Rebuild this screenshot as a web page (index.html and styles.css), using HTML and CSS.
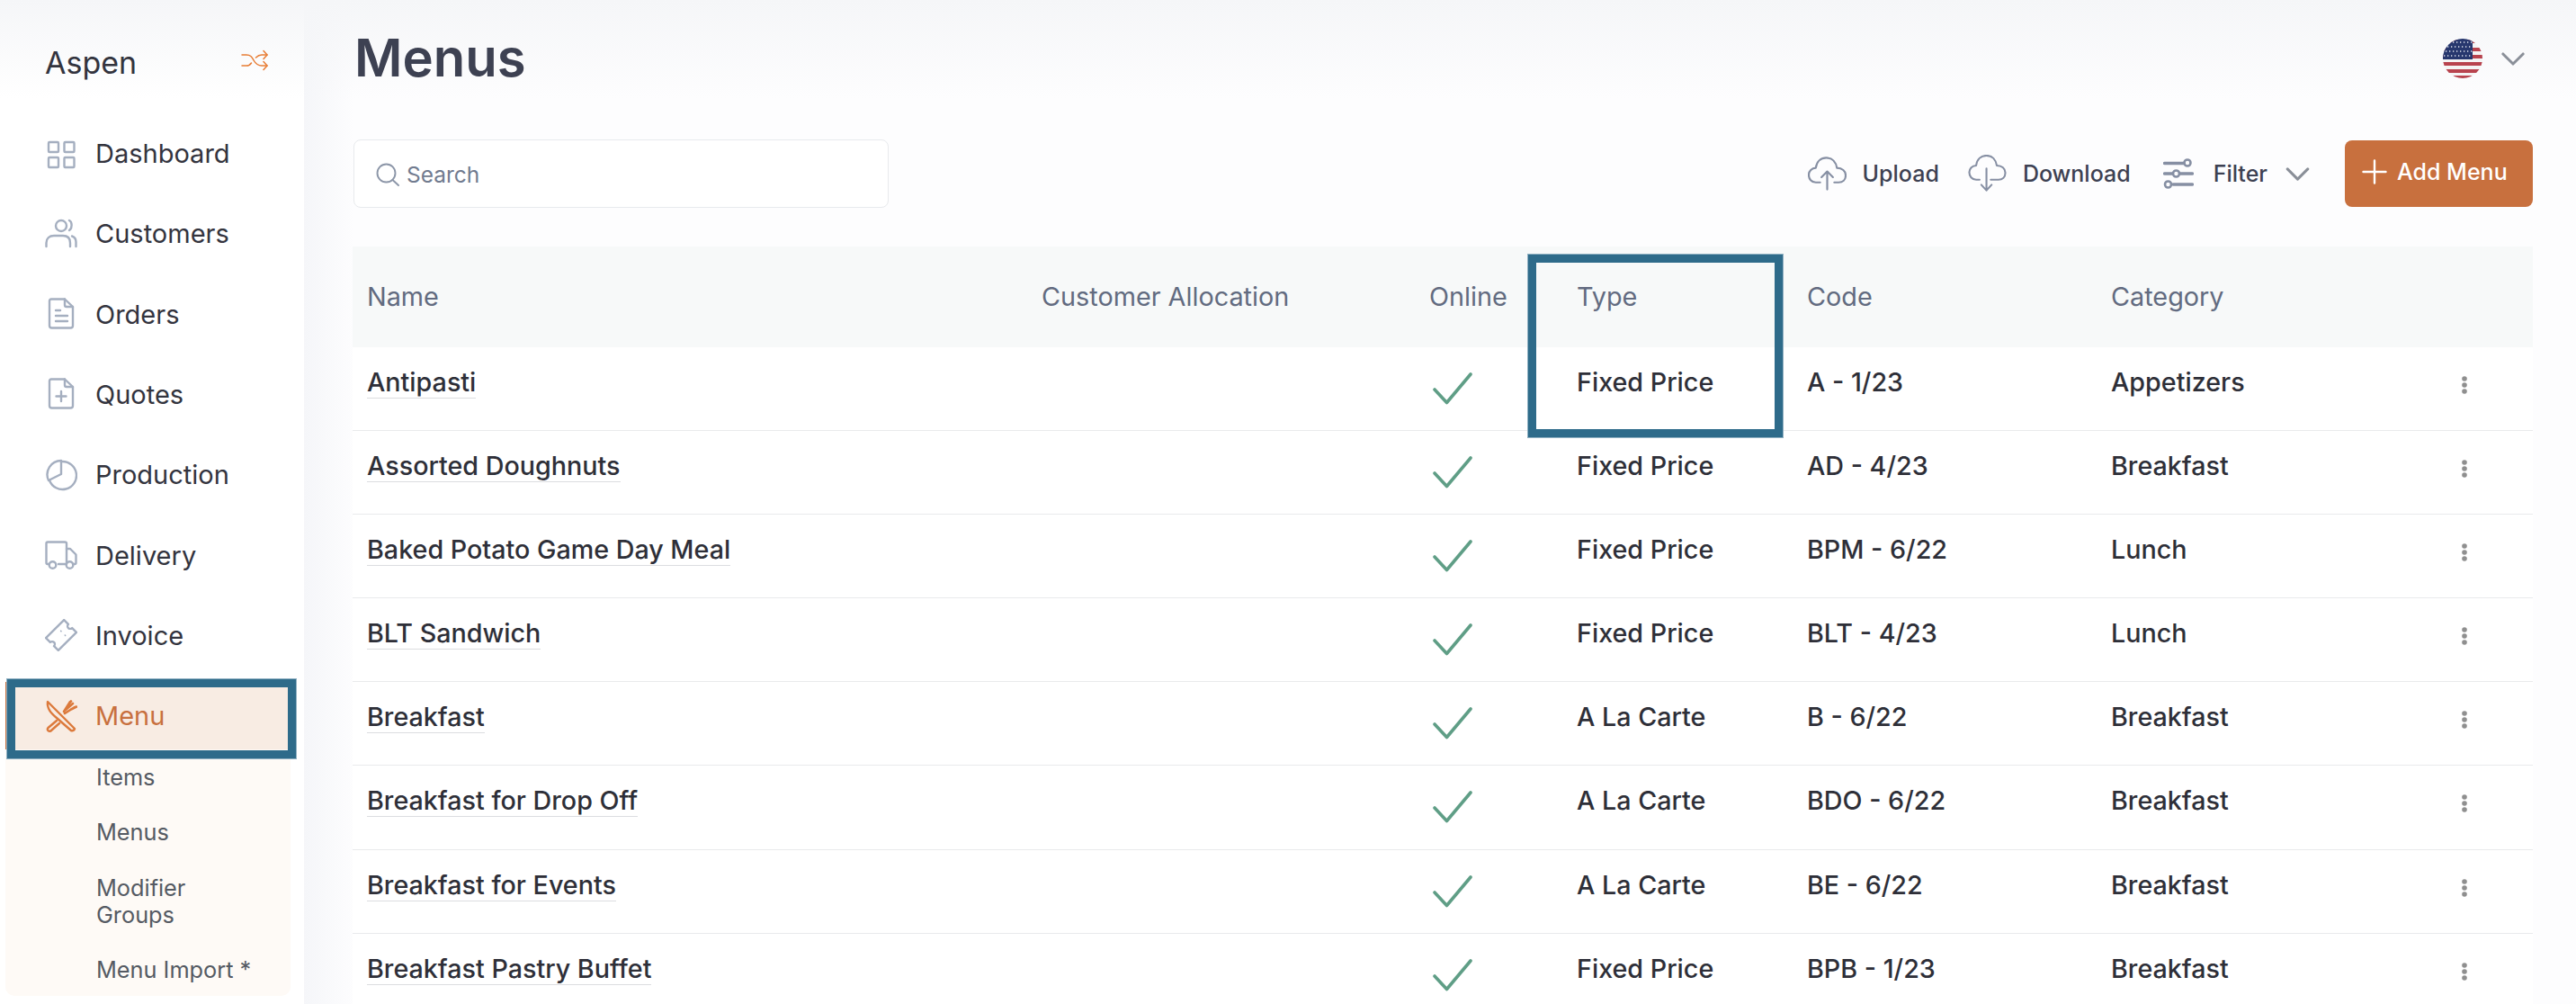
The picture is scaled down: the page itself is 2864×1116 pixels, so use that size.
FILE: index.html
```html
<!DOCTYPE html>
<html lang="en">
<head>
    <meta charset="UTF-8">
    <title>Aspen - Menus</title>
    <link rel="stylesheet" href="styles.css">
</head>
<body>
    <svg class="sprite" width="0" height="0">
        <symbol id="check" viewBox="0 0 44 36">
            <path d="M2 19 L15.500 33.500 L42 2" fill="none" stroke="#5f9e86" stroke-width="3.600" stroke-linecap="round" stroke-linejoin="round"/>
        </symbol>
        <symbol id="dots" viewBox="0 0 8 22">
            <circle cx="4" cy="4" r="2.800" fill="#8f8f8f"/>
            <circle cx="4" cy="11" r="2.800" fill="#8f8f8f"/>
            <circle cx="4" cy="18" r="2.800" fill="#8f8f8f"/>
        </symbol>
        <symbol id="chevron" viewBox="0 0 28 16">
            <path d="M2 2 L14 14 L26 2" fill="none" stroke="currentColor" stroke-width="3.200" stroke-linecap="round" stroke-linejoin="round"/>
        </symbol>
    </svg>

    <div class="app">
        <aside class="sidebar">
            <div class="brand">
                <span class="brand-name">Aspen</span>
                <svg class="brand-switch" viewBox="0 0 30 24" fill="none" stroke="#e87d35" stroke-width="1.500" stroke-linecap="round" stroke-linejoin="round">
                    <path d="M1 6 H6 C11 6 12 8.500 14 12 C16 15.500 18 18 23 18 H29"/>
                    <path d="M1 18 H6 C9 18 10.500 16.500 11.500 15 M16.500 9 C18 7.500 20 6 23 6 H29"/>
                    <path d="M25 1.500 L29 6 L25 10.500 M25 13.500 L29 18 L25 22.500"/>
                </svg>
            </div>

            <nav class="nav">
                <a class="nav-item">
                    <svg class="nav-icon" viewBox="0 0 36 36"><rect x="4" y="5" width="11" height="11" rx="1"/><rect x="21.500" y="5" width="11" height="11" rx="1"/><rect x="4" y="22" width="11" height="11" rx="1"/><rect x="21.500" y="22" width="11" height="11" rx="1"/></svg>
                    Dashboard
                </a>
                <a class="nav-item">
                    <svg class="nav-icon" viewBox="0 0 36 36"><circle cx="18" cy="9" r="6"/><path d="M27 3 C30.500 4.500 30.500 12 27 14"/><path d="M1.500 32 V28 C1.500 23 5 20 10 20 H20 C25 20 28 23 28 28 V32"/><path d="M30 20.500 C33 21.500 34.500 24 34.500 27 V32"/></svg>
                    Customers
                </a>
                <a class="nav-item">
                    <svg class="nav-icon" viewBox="0 0 36 36"><path d="M7 1.500 H22 L31 10 V31 Q31 33.500 28.500 33.500 H7.500 Q5 33.500 5 31 V3.500 Q5 1.500 7 1.500 Z"/><path d="M22 1.500 V8 Q22 10 24 10 H31"/><path d="M12 14 H17 M12 20 H25 M12 26 H25"/></svg>
                    Orders
                </a>
                <a class="nav-item">
                    <svg class="nav-icon" viewBox="0 0 36 36"><path d="M7 1.500 H22 L31 10 V31 Q31 33.500 28.500 33.500 H7.500 Q5 33.500 5 31 V3.500 Q5 1.500 7 1.500 Z"/><path d="M22 1.500 V8 Q22 10 24 10 H31"/><path d="M18 15 V26 M12.500 20.500 H23.500"/></svg>
                    Quotes
                </a>
                <a class="nav-item">
                    <svg class="nav-icon" viewBox="0 0 36 36"><path d="M19 3 A15.500 15.500 0 1 1 5 24"/><path d="M18 2 A15.500 15.500 0 0 0 4 24 L18 17 Z"/></svg>
                    Production
                </a>
                <a class="nav-item">
                    <svg class="nav-icon" viewBox="0 0 36 36"><path d="M5 28 H3 Q1.500 28 1.500 26.500 V5 Q1.500 3.500 3 3.500 H22 Q24 3.500 24 5 V28 H15"/><path d="M24 11 H28 L34.500 17.500 V26.500 Q34.500 28 33 28 H31"/><circle cx="8.500" cy="29" r="3.800"/><circle cx="27.500" cy="29" r="3.800"/></svg>
                    Delivery
                </a>
                <a class="nav-item">
                    <svg class="nav-icon" viewBox="0 0 36 36"><g transform="rotate(-45 18 18)"><path d="M3.750 8.250 H32.250 V15 A3 3 0 0 0 32.250 21 V27.750 H3.750 V21 A3 3 0 0 0 3.750 15 Z"/><path d="M21 14.500 V15 M21 21 V21.500" stroke-width="1.600"/></g></svg>
                    Invoice
                </a>
                <div class="nav-group">
                    <a class="nav-item nav-item-active">
                        <svg class="nav-icon" viewBox="0 0 36 36"><path d="M3 2 C2 10 7 15 13 20 L29 34 Q32 35 33 32 L3 2 Z"/><path d="M13 23 L3.500 31 Q2 33 4 34.500 Q6 35.500 7.500 33.500 L16 26"/><path d="M22 15 L33 8 M21 13 L28 2 M25 6.500 L29 1.500 M29 10.500 L35 7.500 M23 11 L31 4" stroke-width="2.600"/></svg>
                        Menu
                    </a>
                    <div class="callout callout-nav"></div>
                    <div class="subnav">
                        <a class="subnav-item">Items</a>
                        <a class="subnav-item">Menus</a>
                        <a class="subnav-item subnav-item-low">Modifier<br>Groups</a>
                        <a class="subnav-item subnav-item-low">Menu Import *</a>
                    </div>
                </div>
            </nav>
        </aside>

        <main class="main">
            <header class="topbar">
                <h1>Menus</h1>
                <div class="lang">
                    <svg class="flag" viewBox="0 0 44 44">
                        <clipPath id="flagClip"><circle cx="22" cy="22" r="22"/></clipPath>
                        <g clip-path="url(#flagClip)">
                            <rect width="44" height="44" fill="#f4f4f4"/>
                            <path d="M0 3 H44 M0 12 H44 M0 20 H44 M0 28 H44 M0 36 H44 M0 43 H44" stroke="#b8434e" stroke-width="3.800"/>
                            <rect width="33" height="23" fill="#27376e"/>
                            <path d="M3 4 H33 M1 9 H33 M3 14 H33 M1 19 H33" stroke="#dfe3ee" stroke-width="1.300" stroke-dasharray="1.300 2.700"/>
                        </g>
                    </svg>
                    <svg class="chevron chevron-lang"><use href="#chevron"/></svg>
                </div>
            </header>

            <div class="toolbar">
                <label class="search">
                    <svg class="search-icon" viewBox="0 0 26 26" fill="none" stroke="#8c96a8" stroke-width="1.900" stroke-linecap="round"><circle cx="11.500" cy="11.500" r="10"/><path d="M18.500 19 L25 25"/></svg>
                    <span>Search</span>
                </label>
                <div class="tools">
                    <a class="tool">
                        <svg class="tool-icon tool-icon-cloud" viewBox="0 0 44 40" fill="none" stroke="#868fa3" stroke-width="2.200" stroke-linecap="round" stroke-linejoin="round"><path d="M14 30 H9 C4 30 1 26 1 21.500 C1 17 4.500 13.500 9 13.500 C10 6 15 2 21 2 C28 2 32 7 33 13.500 C39 13.500 43 17 43 22 C43 27 39.500 30 35 30 H30"/><path d="M22 38 V18 M15.500 24 L22 17.500 L28.500 24"/></svg>
                        Upload
                    </a>
                    <a class="tool">
                        <svg class="tool-icon tool-icon-cloud" viewBox="0 0 44 44" fill="none" stroke="#868fa3" stroke-width="2.200" stroke-linecap="round" stroke-linejoin="round"><path d="M13 29 H9 C4 29 1 25 1 20.500 C1 16 4.500 12.500 9 12.500 C10 5 15 1 21 1 C28 1 32 6 33 12.500 C39 12.500 43 16 43 21 C43 26 39.500 29 35 29 H26"/><path d="M21 16 V41 M15 35 L21 41.500 L27 35"/></svg>
                        Download
                    </a>
                    <a class="tool tool-filter">
                        <svg class="tool-icon tool-icon-filter" viewBox="0 0 34 34" fill="none" stroke="#868fa3" stroke-width="3.400" stroke-linecap="round"><path d="M1.500 5.500 H23 M1.500 17 H10 M19 17 H32.500 M11 29 H32.500"/><circle cx="27" cy="5" r="3.500" stroke-width="2.600"/><circle cx="14.500" cy="17" r="3.500" stroke-width="2.600"/><circle cx="5.500" cy="29" r="3.500" stroke-width="2.600"/></svg>
                        Filter
                        <svg class="chevron chevron-filter"><use href="#chevron"/></svg>
                    </a>
                    <button class="add-btn">
                        <svg class="add-icon" viewBox="0 0 28 28" stroke="#fff" stroke-width="2.400" stroke-linecap="round"><path d="M14 1.500 V26.500 M1.500 14 H26.500"/></svg>
                        Add Menu
                    </button>
                </div>
            </div>

            <div class="table-wrap">
                <table class="menus">
                    <colgroup>
                        <col class="col-name"><col class="col-alloc"><col class="col-online"><col class="col-type"><col class="col-code"><col class="col-cat"><col class="col-more">
                    </colgroup>
                    <thead>
                        <tr><th>Name</th><th>Customer Allocation</th><th>Online</th><th>Type</th><th>Code</th><th>Category</th><th></th></tr>
                    </thead>
                    <tbody>
                        <tr><td><span class="name">Antipasti</span></td><td></td><td><svg class="check"><use href="#check"/></svg></td><td>Fixed Price</td><td>A - 1/23</td><td>Appetizers</td><td><svg class="dots"><use href="#dots"/></svg></td></tr>
                        <tr><td><span class="name">Assorted Doughnuts</span></td><td></td><td><svg class="check"><use href="#check"/></svg></td><td>Fixed Price</td><td>AD - 4/23</td><td>Breakfast</td><td><svg class="dots"><use href="#dots"/></svg></td></tr>
                        <tr><td><span class="name">Baked Potato Game Day Meal</span></td><td></td><td><svg class="check"><use href="#check"/></svg></td><td>Fixed Price</td><td>BPM - 6/22</td><td>Lunch</td><td><svg class="dots"><use href="#dots"/></svg></td></tr>
                        <tr><td><span class="name">BLT Sandwich</span></td><td></td><td><svg class="check"><use href="#check"/></svg></td><td>Fixed Price</td><td>BLT - 4/23</td><td>Lunch</td><td><svg class="dots"><use href="#dots"/></svg></td></tr>
                        <tr><td><span class="name">Breakfast</span></td><td></td><td><svg class="check"><use href="#check"/></svg></td><td>A La Carte</td><td>B - 6/22</td><td>Breakfast</td><td><svg class="dots"><use href="#dots"/></svg></td></tr>
                        <tr><td><span class="name">Breakfast for Drop Off</span></td><td></td><td><svg class="check"><use href="#check"/></svg></td><td>A La Carte</td><td>BDO - 6/22</td><td>Breakfast</td><td><svg class="dots"><use href="#dots"/></svg></td></tr>
                        <tr><td><span class="name">Breakfast for Events</span></td><td></td><td><svg class="check"><use href="#check"/></svg></td><td>A La Carte</td><td>BE - 6/22</td><td>Breakfast</td><td><svg class="dots"><use href="#dots"/></svg></td></tr>
                        <tr><td><span class="name">Breakfast Pastry Buffet</span></td><td></td><td><svg class="check"><use href="#check"/></svg></td><td>Fixed Price</td><td>BPB - 1/23</td><td>Breakfast</td><td><svg class="dots"><use href="#dots"/></svg></td></tr>
                    </tbody>
                </table>
                <div class="callout callout-type"></div>
            </div>
        </main>
    </div>
</body>
</html>
```

FILE: styles.css
```css
:root {
    --ink: #33343e;
    --muted: #626b80;
    --orange: #c8703e;
    --callout: #2e6b8a;
    --icon: #a5afc0;
}

* {
    box-sizing: border-box;
}

html, body {
    height: 100%;
}

body {
    margin: 0;
    overflow: hidden;
    font-family: Inter, "Liberation Sans", sans-serif;
    color: var(--ink);
    background: #fff;
}

.sprite {
    position: absolute;
}

.app {
    display: flex;
    height: 1116px;
}

/* sidebar */
.sidebar {
    flex: 0 0 338px;
    background: linear-gradient(to bottom, #f5f6f8, #fff 110px);
}

.brand {
    display: flex;
    align-items: center;
    justify-content: space-between;
    height: 133px;
    padding: 0 40px 0 50px;
}

.brand-name {
    font-size: 34px;
    line-height: 40px;
    margin-top: 6px;
}

.brand-switch {
    width: 30px;
    height: 24px;
}

.nav {
    display: flex;
    flex-direction: column;
    gap: 14.330px;
    padding-left: 6px;
    width: 323px;
}

.nav-item {
    display: flex;
    align-items: center;
    gap: 20px;
    height: 75px;
    padding-left: 44px;
    font-size: 29px;
}

.nav-icon {
    flex: 0 0 36px;
    width: 36px;
    height: 36px;
    fill: none;
    stroke: var(--icon);
    stroke-width: 2.400;
    stroke-linecap: round;
    stroke-linejoin: round;
}

.nav-group {
    position: relative;
}

.nav-item-active {
    color: var(--orange);
    background: #f8ece3;
    border-left: 4px solid var(--orange);
    padding-left: 40px;
}

.nav-item-active .nav-icon {
    stroke: #dc7a3c;
}

.subnav {
    background: #fefaf6;
    border-radius: 0 0 10px 10px;
}

.subnav-item {
    display: block;
    padding: 16px 10px 15px 101px;
    font-size: 25.300px;
    line-height: 30px;
    color: #555a63;
}

.subnav-item-low {
    padding-top: 17px;
    padding-bottom: 14px;
}

/* annotation boxes drawn over the screenshot */
.callout {
    position: absolute;
    border: 10px solid var(--callout);
    outline: 1px solid #8fb0c2;
    outline-offset: -1px;
}

.callout-nav {
    top: -4px;
    left: 1px;
    width: 323px;
    height: 90px;
}

.callout-type {
    top: 8px;
    left: 1306px;
    width: 285px;
    height: 205px;
}

/* main */
.main {
    flex: 1;
    padding: 0 48px 0 54px;
    background:
        linear-gradient(to bottom, #f5f6f8, rgba(253, 253, 254, 0) 110px),
        linear-gradient(to right, #f5f6f9, #fdfdfe 56px);
}

.topbar {
    display: flex;
    align-items: center;
    justify-content: space-between;
    height: 130px;
}

h1 {
    margin: 0 0 2px 2px;
    font-size: 58px;
    font-weight: 600;
    line-height: 70px;
    color: #3d4152;
}

.lang {
    display: flex;
    align-items: center;
    gap: 21px;
    padding-right: 9px;
}

.flag {
    width: 44px;
    height: 44px;
}

.chevron {
    color: #8a8f98;
}

.chevron-lang {
    width: 26px;
    height: 15px;
}

.toolbar {
    display: flex;
    align-items: center;
    justify-content: space-between;
    margin: 25px 0 43px;
}

.search {
    display: flex;
    align-items: center;
    gap: 8px;
    width: 595px;
    height: 76px;
    margin-left: 1px;
    padding: 2px 0 0 24px;
    background: #fff;
    border: 1px solid #e8eaed;
    border-radius: 8px;
    font-size: 24.500px;
    color: #717b8f;
}

.search-icon {
    width: 26px;
    height: 26px;
}

.tools {
    display: flex;
    align-items: center;
    gap: 32px;
}

.tool {
    display: flex;
    align-items: center;
    gap: 18px;
    font-size: 25px;
    font-weight: 500;
    color: #3d4152;
}

.tool-icon-cloud {
    width: 43px;
    height: 42px;
}

.tool-icon-filter {
    width: 34px;
    height: 34px;
}

.tool-filter {
    gap: 22px;
    margin-left: 4px;
}

.chevron-filter {
    width: 27px;
    height: 15px;
    margin-left: -2px;
}

.add-btn {
    display: flex;
    align-items: center;
    gap: 11px;
    width: 209px;
    height: 74px;
    margin-left: 7px;
    padding: 0 0 4px 19px;
    background: var(--orange);
    border: none;
    border-radius: 8px;
    color: #fff;
    font-family: inherit;
    font-size: 25px;
    font-weight: 500;
}

.add-icon {
    width: 28px;
    height: 28px;
}

/* table */
.table-wrap {
    position: relative;
}

.menus {
    width: 2424px;
    table-layout: fixed;
    border-collapse: separate;
    border-spacing: 0;
    background: #fff;
}

.col-name { width: 750px; }
.col-alloc { width: 431px; }
.col-online { width: 164px; }
.col-type { width: 256px; }
.col-code { width: 338px; }
.col-cat { width: 385px; }

th {
    height: 112px;
    padding: 0 0 2px 16px;
    background: #f7f9f9;
    color: var(--muted);
    font-size: 28.800px;
    font-weight: 400;
    text-align: left;
}

td {
    height: 93.100px;
    padding: 22px 0 0 16px;
    border-bottom: 1px solid #e9eaec;
    vertical-align: top;
    font-size: 28.700px;
    font-weight: 500;
    line-height: 34px;
    color: #2e2f38;
}

.name {
    display: inline-block;
    border-bottom: 1px solid #dcdde0;
}

.check {
    display: block;
    width: 44px;
    height: 36px;
    margin: 6px 0 0 4px;
}

.dots {
    display: block;
    width: 8px;
    height: 22px;
    margin: 9px 0 0 4px;
}
```
